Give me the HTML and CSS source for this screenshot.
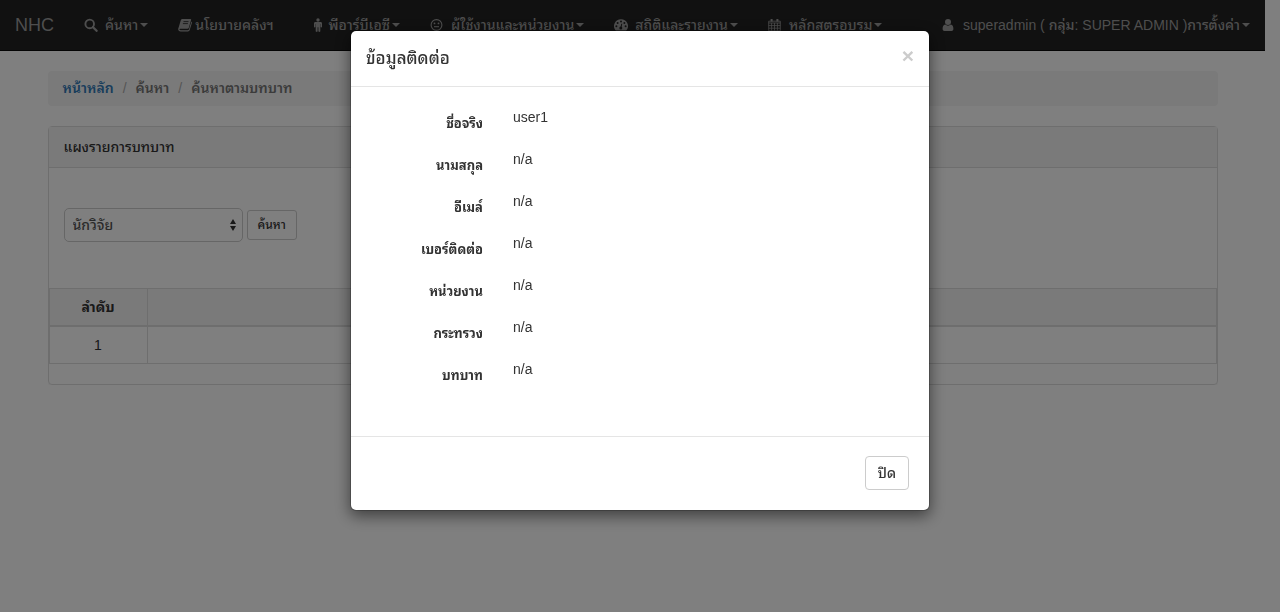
FILE: index.html
```html
<!DOCTYPE html>
<html lang="th">
<head>
<meta charset="utf-8">
<meta name="viewport" content="width=device-width, initial-scale=1">
<title>NHC</title>
<link rel="stylesheet" href="styles.css">
</head>
<body class="modal-open">
<nav class="navbar">
  <a class="brand" href="#">NHC</a>
  <ul class="nav">
    <li><a href="#"><svg class="icon" viewBox="0 0 14 14"><circle cx="5.700" cy="5.900" r="4.300" fill="none" stroke="currentColor" stroke-width="1.900"/><path d="M9 9.200l3.600 3.600" stroke="currentColor" stroke-width="2.300" stroke-linecap="round"/></svg><span>ค้นหา</span><i class="caret"></i></a></li>
    <li><a href="#" class="tight"><svg class="icon" viewBox="0 0 14 14"><path d="M4.600 1h7.700c.7 0 1 .5.800 1.100l-2.300 7.600c-.2.700-.7 1-1.400 1H2.100c-.6 0-.8.400-.6.800.2.500.6.700 1.200.7h7.200c.5 0 .8-.2 1-.7l2.500-8c.500.300.7.800.5 1.400l-2.300 7.400c-.2.700-.9 1.100-1.600 1.100H2.500C.9 13.400-.2 11.900.3 10.500L2.800 2.300C3.100 1.500 3.700 1 4.600 1z" fill="currentColor"/><path d="M5.500 3.600h5M4.900 5.600h5" stroke="#222" stroke-width=".8"/></svg><span>นโยบายคลังฯ</span></a></li>
    <li><a href="#" class="person"><svg class="icon" viewBox="0 0 10 14"><circle cx="5" cy="2" r="1.700" fill="currentColor"/><path d="M2.500 4h5C8.400 4 9 4.600 9 5.400v3.400c0 .9-1.400.9-1.400 0V6h-.3v7c0 1.200-1.900 1.200-1.900 0V9.200h-.8V13c0 1.200-1.900 1.200-1.900 0V6h-.3v2.800c0 .9-1.400.9-1.400 0V5.400C1 4.600 1.600 4 2.500 4z" fill="currentColor"/></svg><span>พีอาร์บีเอซี</span><i class="caret"></i></a></li>
    <li><a href="#"><svg class="icon" viewBox="0 0 14 14"><circle cx="6.500" cy="7" r="5.400" fill="none" stroke="currentColor" stroke-width="1.100"/><circle cx="4.500" cy="5.400" r=".9" fill="currentColor"/><circle cx="8.500" cy="5.400" r=".9" fill="currentColor"/><path d="M4 8.700h5" stroke="currentColor" stroke-width="1.100"/></svg><span>ผู้ใช้งานและหน่วยงาน</span><i class="caret"></i></a></li>
    <li><a href="#"><svg class="icon" viewBox="0 0 14 14"><path d="M7 1.200a6.900 6.900 0 0 0-5.700 10.900c.2.300.4.400.7.400h10c.3 0 .5-.1.700-.4A6.900 6.900 0 0 0 7 1.200z" fill="currentColor"/><g fill="#222"><circle cx="7" cy="3.500" r="1"/><circle cx="3.600" cy="5" r="1"/><circle cx="10.400" cy="5" r="1"/><circle cx="2.400" cy="8.200" r="1"/><circle cx="11.600" cy="8.200" r="1"/><circle cx="6.800" cy="10" r="1.500"/></g><path d="M6.800 10l1-4.300" stroke="#222"/></svg><span>สถิติและรายงาน</span><i class="caret"></i></a></li>
    <li><a href="#"><svg class="icon" viewBox="0 0 14 14" fill="none" stroke="currentColor" stroke-width=".8"><path d="M.7 3.200h11.600v9.600H.7zM.7 5h11.600M.7 7.600h11.600M.7 10.200h11.600M3.600 5v7.800M6.500 5v7.800M9.400 5v7.800"/><path d="M3.600 1v2.600M9.400 1v2.600" stroke-width="2"/></svg><span>หลักสูตรอบรม</span><i class="caret"></i></a></li>
  </ul>
  <ul class="nav nav-right">
    <li><a href="#"><svg class="icon" viewBox="0 0 14 14"><circle cx="6" cy="4" r="3" fill="currentColor"/><path d="M3.200 6.500C1.300 6.800.6 8.600.6 10.900c0 1.200.8 2 1.900 2h7c1.100 0 1.900-.8 1.900-2 0-2.300-.7-4.100-2.600-4.400-1.500 1.500-4.100 1.500-5.600 0z" fill="currentColor"/></svg><span>superadmin ( กลุ่ม: SUPER ADMIN )การตั้งค่า</span><i class="caret"></i></a></li>
  </ul>
</nav>

<main class="container">
  <ol class="breadcrumb">
    <li><a href="#">หน้าหลัก</a></li>
    <li>ค้นหา</li>
    <li>ค้นหาตามบทบาท</li>
  </ol>
  <section class="panel">
    <h2 class="panel-heading">แผงรายการบทบาท</h2>
    <form class="search">
      <div class="select-wrap">
        <select class="select" aria-label="บทบาท"><option>นักวิจัย</option></select>
        <svg class="arrows" viewBox="0 0 6 12"><path d="M3 0l3 5H0zM3 12L0 7h6z" fill="currentColor"/></svg>
      </div>
      <button class="btn btn-sm" type="button">ค้นหา</button>
    </form>
    <table class="table">
      <thead><tr><th class="num">ลำดับ</th><th></th></tr></thead>
      <tbody><tr><td class="num">1</td><td></td></tr></tbody>
    </table>
  </section>
</main>

<div class="backdrop"></div>
<div class="modal">
  <div class="dialog" role="dialog" aria-modal="true" aria-labelledby="dialog-title">
    <header class="dialog-header">
      <h4 class="dialog-title" id="dialog-title">ข้อมูลติดต่อ</h4>
      <button class="close" type="button" aria-label="ปิด">×</button>
    </header>
    <dl class="details">
      <dt>ชื่อจริง</dt><dd>user1</dd>
      <dt>นามสกุล</dt><dd>n/a</dd>
      <dt>อีเมล์</dt><dd>n/a</dd>
      <dt>เบอร์ติดต่อ</dt><dd>n/a</dd>
      <dt>หน่วยงาน</dt><dd>n/a</dd>
      <dt>กระทรวง</dt><dd>n/a</dd>
      <dt>บทบาท</dt><dd>n/a</dd>
    </dl>
    <footer class="dialog-footer"><button class="btn" type="button">ปิด</button></footer>
  </div>
</div>
</body>
</html>
```
FILE: styles.css
```css
* { box-sizing: border-box; }
body {
  margin: 0;
  font-family: "Liberation Sans", "Noto Sans Thai Looped", "Loma", "Noto Sans Thai", sans-serif;
  font-size: 14px;
  line-height: 20px;
  color: #333;
  background: #fff;
}
.modal-open { overflow: hidden; padding-right: 15px; }
a { color: #337ab7; text-decoration: none; }

.navbar {
  display: flex;
  height: 51px;
  background: #222;
  border-bottom: 1px solid #080808;
  white-space: nowrap;
}
.brand { padding: 15px; font-size: 18px; color: #9d9d9d; }
.nav { display: flex; margin: 0; padding: 0; list-style: none; font-weight: 500; }
.nav a { display: flex; align-items: center; padding: 15px; color: #9d9d9d; }
.nav-right { margin-left: auto; }
.icon { width: 14px; height: 14px; margin-right: 7px; }
.tight .icon { margin-right: 3px; }
.nav .person { padding-left: 24px; }
.person .icon { width: 10px; margin-right: 6px; }
.caret {
  margin-left: 2px;
  border-top: 4px solid;
  border-left: 4px solid transparent;
  border-right: 4px solid transparent;
}

.container { max-width: 1170px; margin: 20px auto 0; }
.breadcrumb {
  display: flex;
  margin: 0 0 20px;
  padding: 7px 15px 8px;
  list-style: none;
  background: #f5f5f5;
  border-radius: 4px;
  font-weight: 600;
  color: #777;
}
.breadcrumb li + li::before { content: "/"; padding: 0 9px; font-weight: 400; color: #aaa; }

.panel {
  border: 1px solid #ddd;
  border-radius: 4px;
  box-shadow: 0 1px 1px rgba(0, 0, 0, .05);
  padding-bottom: 20px;
}
.panel-heading {
  margin: 0;
  padding: 10px 15px;
  font-size: 14px;
  font-weight: 500;
  background: #f5f5f5;
  border-bottom: 1px solid #ddd;
}
.search { display: flex; align-items: center; gap: 4px; padding: 40px 15px 46px; }
.select-wrap { position: relative; width: 179px; }
.select {
  display: block;
  width: 100%;
  height: 34px;
  padding: 0 8px;
  appearance: none;
  font: inherit;
  font-weight: 500;
  color: #555;
  background: #fff;
  border: 1px solid #ccc;
  border-radius: 5px;
}
.arrows { position: absolute; right: 7px; top: 11px; width: 6px; height: 12px; }
.btn {
  padding: 6px 12px;
  font: inherit;
  font-weight: 500;
  color: #333;
  background: #fff;
  border: 1px solid #ccc;
  border-radius: 4px;
}
.btn-sm { height: 30px; padding: 0 10px; font-size: 12px; border-radius: 3px; }
.table { width: 100%; border-collapse: collapse; table-layout: fixed; }
.table th, .table td { height: 37px; padding: 8px; border: 1px solid #ddd; text-align: center; }
.table th { background: #f5f5f5; border-bottom-width: 2px; }
.table .num { width: 98px; }

.backdrop { position: fixed; inset: 0; background: rgba(0, 0, 0, .5); }
.modal { position: fixed; inset: 0; overflow: auto; }
.dialog {
  max-width: 580px;
  margin: 30px auto;
  background: #fff;
  background-clip: padding-box;
  border: 1px solid rgba(0, 0, 0, .2);
  border-radius: 6px;
  box-shadow: 0 5px 15px rgba(0, 0, 0, .5);
}
.dialog-header {
  display: flex;
  justify-content: space-between;
  align-items: flex-start;
  height: 56px;
  padding: 15px;
  border-bottom: 1px solid #e5e5e5;
}
.dialog-title { margin: 0; font-size: 17px; line-height: 26px; font-weight: 500; }
.close { padding: 0; border: 0; background: none; font: bold 21px/20px "Liberation Sans", sans-serif; color: #ccc; }
.details {
  display: grid;
  grid-template-columns: 117px 1fr;
  column-gap: 30px;
  grid-auto-rows: 42px;
  margin: 0;
  padding: 20px 15px 35px;
}
.details dt { padding-top: 7px; font-size: 13px; font-weight: 700; text-align: right; }
.details dd { margin: 0; }
.dialog-footer { padding: 19px 20px 20px; text-align: right; border-top: 1px solid #e5e5e5; }
```
